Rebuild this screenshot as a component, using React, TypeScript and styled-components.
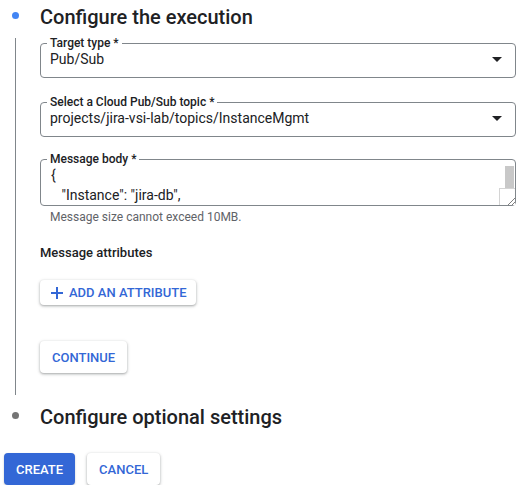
import React from "react";
import styled, { createGlobalStyle, css } from "styled-components";

const GlobalStyle = createGlobalStyle`
  body {
    margin: 0;
    background: #fff;
    font-family: Roboto, "Liberation Sans", Arial, sans-serif;
    color: #202124;
  }
`;

const Page = styled.div`
  padding: 1px 15px 0 4px;
`;

// 左侧 rail + 右侧内容
const Step = styled.section<{ $mt?: number }>`
  display: grid;
  grid-template-columns: 23px 1fr;
  column-gap: 13px;
  margin-top: ${(p) => p.$mt ?? 0}px;
`;

const Dot = styled.span<{ $active?: boolean }>`
  justify-self: center;
  align-self: start;
  margin-top: 11px;
  width: 7px;
  height: 7px;
  border-radius: 50%;
  background: ${(p) => (p.$active ? "#4285f4" : "#757575")};
`;

const StepTitle = styled.h2`
  margin: 0;
  font-size: 20px;
  line-height: 32px;
  font-weight: 500;
  color: #202124;
`;

const RailLine = styled.div`
  justify-self: center;
  width: 1px;
  margin-top: 5px;
  background: #80868b;
`;

const StepBody = styled.div`
  display: flex;
  flex-direction: column;
  align-items: flex-start;
  padding: 4px 0 22px;
`;

const Field = styled.fieldset<{ $mt?: number }>`
  align-self: stretch;
  margin: ${(p) => p.$mt ?? 0}px 0 0;
  min-width: 0;
  padding: 0 5px 8px 6px;
  border: 1px solid #80868b;
  border-radius: 4px;
`;

const Label = styled.legend`
  padding: 0 3px;
  font-size: 12px;
  line-height: 12px;
  font-weight: 500;
  color: #202124;
`;

const SelectRow = styled.div`
  display: flex;
  align-items: center;
  justify-content: space-between;
  padding-left: 3px;
  font-size: 14px;
  line-height: 20px;
`;

const Arrow = styled.svg`
  margin-right: 8px;
`;

const BodyField = styled(Field)`
  padding: 0 0 0 6px;
`;

const AreaWrap = styled.div`
  position: relative;
`;

const MessageArea = styled.textarea`
  display: block;
  box-sizing: border-box;
  width: 100%;
  height: 40px;
  margin: 0;
  padding: 0 18px 0 4px;
  border: none;
  outline: none;
  resize: none;
  overflow: hidden;
  font-family: Roboto, "Liberation Sans", Arial, sans-serif;
  font-size: 14px;
  line-height: 20px;
  color: #202124;
  background: transparent;
  white-space: pre;
`;

// textarea 的滚动条和拖拽角，叠在右侧
const ScrollGutter = styled.div`
  position: absolute;
  top: 0;
  right: 0;
  bottom: 0;
  width: 16px;
  display: flex;
  flex-direction: column;
  align-items: flex-end;
`;

const Thumb = styled.div`
  width: 9px;
  height: 22px;
  margin: 1px 1px 0 0;
  background: #c8c8c8;
`;

const Corner = styled.div`
  box-sizing: border-box;
  width: 16px;
  height: 17px;
  margin-top: auto;
  border-left: 1px solid #d4d4d4;
  border-top: 1px solid #d4d4d4;
  background: #fff;
  display: flex;
  align-items: flex-end;
  justify-content: flex-end;
`;

const Helper = styled.div`
  margin-top: 3px;
  padding-left: 10px;
  font-size: 12px;
  line-height: 16px;
  color: #5f6368;
`;

const SubTitle = styled.h3`
  margin: 18px 0 0;
  font-size: 13px;
  line-height: 20px;
  font-weight: 500;
  color: #202124;
`;

const Button = styled.button<{ $primary?: boolean; $dense?: boolean; $mt?: number }>`
  display: inline-flex;
  align-items: center;
  gap: 6px;
  box-sizing: border-box;
  height: ${(p) => (p.$dense ? 25 : 32)}px;
  margin-top: ${(p) => p.$mt ?? 0}px;
  padding: ${(p) => (p.$dense ? "0 9px 0 11px" : "0 12px")};
  border: none;
  border-radius: 4px;
  font-family: Roboto, "Liberation Sans", Arial, sans-serif;
  font-size: 13px;
  font-weight: 500;
  text-transform: uppercase;
  cursor: pointer;
  ${(p) =>
    p.$primary
      ? css`
          background: #3367d6;
          color: #fff;
          box-shadow: 0 1px 2px rgba(60, 64, 67, 0.3);
        `
      : css`
          background: #fff;
          color: #3367d6;
          box-shadow: 0 1px 2px rgba(60, 64, 67, 0.3), 0 1px 3px 1px rgba(60, 64, 67, 0.15);
        `}
`;

const Actions = styled.div`
  display: flex;
  gap: 12px;
  margin-top: 20px;
`;

const messageBody = `{
   "Instance": "jira-db",
   "Action": "stop"
}`;

function DropArrow() {
  return (
    <Arrow width="10" height="5" viewBox="0 0 10 5">
      <path d="M0 0h10L5 5z" fill="#202124" />
    </Arrow>
  );
}

function PlusIcon() {
  return (
    <svg width="12" height="12" viewBox="0 0 12 12">
      <path d="M6 0v12M0 6h12" stroke="#3367d6" strokeWidth="2" />
    </svg>
  );
}

function Grip() {
  return (
    <svg width="8" height="8" viewBox="0 0 8 8">
      <path d="M1 8L8 1M5 8L8 5" stroke="#808080" strokeWidth="1" />
    </svg>
  );
}

export default function App() {
  return (
    <Page>
      <GlobalStyle />
      <Step>
        <Dot $active />
        <StepTitle>Configure the execution</StepTitle>
        <RailLine />
        <StepBody>
          <Field>
            <Label>Target type *</Label>
            <SelectRow>
              <span>Pub/Sub</span>
              <DropArrow />
            </SelectRow>
          </Field>
          <Field $mt={18}>
            <Label>Select a Cloud Pub/Sub topic *</Label>
            <SelectRow>
              <span>projects/jira-vsi-lab/topics/InstanceMgmt</span>
              <DropArrow />
            </SelectRow>
          </Field>
          <BodyField $mt={16}>
            <Label>Message body *</Label>
            <AreaWrap>
              <MessageArea defaultValue={messageBody} spellCheck={false} />
              <ScrollGutter>
                <Thumb />
                <Corner>
                  <Grip />
                </Corner>
              </ScrollGutter>
            </AreaWrap>
          </BodyField>
          <Helper>Message size cannot exceed 10MB.</Helper>
          <SubTitle>Message attributes</SubTitle>
          <Button $dense $mt={17}>
            <PlusIcon />
            Add an attribute
          </Button>
          <Button $mt={36}>Continue</Button>
        </StepBody>
      </Step>
      <Step $mt={6}>
        <Dot />
        <StepTitle>Configure optional settings</StepTitle>
      </Step>
      <Actions>
        <Button $primary>Create</Button>
        <Button>Cancel</Button>
      </Actions>
    </Page>
  );
}
